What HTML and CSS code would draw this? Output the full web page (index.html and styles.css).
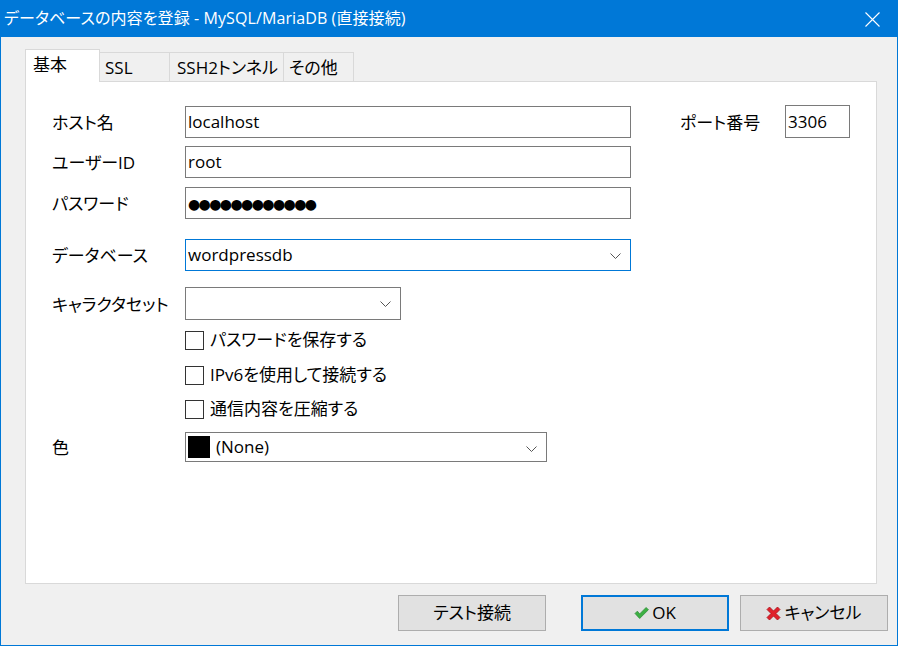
FILE: index.html
```html
<!DOCTYPE html>
<html lang="ja">
<head>
<meta charset="utf-8">
<title>データベースの内容を登録</title>
<link rel="stylesheet" href="styles.css">
</head>
<body>
<div class="window">
  <div class="titlebar">
    <span class="title">データベースの内容を登録 - MySQL/MariaDB (直接接続)</span>
    <svg class="close" width="15" height="15" viewBox="0 0 15 15"><path d="M0.5 0.5 L14.5 14.5 M14.5 0.5 L0.5 14.5" stroke="#fff" stroke-width="1.1" fill="none"/></svg>
  </div>
  <div class="client">
    <div class="tabs">
      <div class="tab active t-basic">基本</div>
      <div class="tab t-ssl">SSL</div>
      <div class="tab t-ssh">SSH2トンネル</div>
      <div class="tab t-other">その他</div>
    </div>
    <div class="panel">
      <div class="row r-host">
        <span class="label">ホスト名</span>
        <div class="field wide">localhost</div>
        <span class="label port-label">ポート番号</span>
        <div class="field port">3306</div>
      </div>
      <div class="row r-user">
        <span class="label">ユーザーID</span>
        <div class="field wide">root</div>
      </div>
      <div class="row r-pass">
        <span class="label">パスワード</span>
        <div class="field wide"><span class="dots">●●●●●●●●●●●●</span></div>
      </div>
      <div class="row r-db">
        <span class="label">データベース</span>
        <div class="field wide combo focused">wordpressdb
          <svg class="chev" width="11" height="7" viewBox="0 0 11 7"><path d="M0.5 0.5 L5.5 5.5 L10.5 0.5" stroke="#555" stroke-width="1" fill="none"/></svg>
        </div>
      </div>
      <div class="row r-charset">
        <span class="label">キャラクタセット</span>
        <div class="field charset combo">
          <svg class="chev" width="11" height="7" viewBox="0 0 11 7"><path d="M0.5 0.5 L5.5 5.5 L10.5 0.5" stroke="#555" stroke-width="1" fill="none"/></svg>
        </div>
      </div>
      <div class="row check r-c1"><span class="box"></span><span class="ctext">パスワードを保存する</span></div>
      <div class="row check r-c2"><span class="box"></span><span class="ctext">IPv6を使用して接続する</span></div>
      <div class="row check r-c3"><span class="box"></span><span class="ctext">通信内容を圧縮する</span></div>
      <div class="row r-color">
        <span class="label">色</span>
        <div class="field color combo"><span class="swatch"></span><span class="ctext">(None)</span>
          <svg class="chev" width="11" height="7" viewBox="0 0 11 7"><path d="M0.5 0.5 L5.5 5.5 L10.5 0.5" stroke="#555" stroke-width="1" fill="none"/></svg>
        </div>
      </div>
    </div>
    <div class="buttons">
      <div class="btn b-test">テスト接続</div>
      <div class="btn b-ok default">
        <svg class="ico" width="15" height="12" viewBox="0 0 16 13"><path d="M1 7 L3.5 4.5 L6 7.5 L13 0.5 L15.5 3 L6 12.5 Z" fill="#3cb043" stroke="#2a8a35" stroke-width="0.8" stroke-linejoin="round"/></svg>OK
      </div>
      <div class="btn b-cancel">
        <svg class="ico" width="15" height="15" viewBox="0 0 15 15"><path d="M1 3.5 L3.5 1 L7.5 5 L11.5 1 L14 3.5 L10 7.5 L14 11.5 L11.5 14 L7.5 10 L3.5 14 L1 11.5 L5 7.5 Z" fill="#e0202a" stroke="#a8101a" stroke-width="0.8" stroke-linejoin="round"/></svg>キャンセル
      </div>
    </div>
  </div>
</div>
</body>
</html>
```

FILE: styles.css
```css
html, body {
  margin: 0;
  padding: 0;
  background: #ffffff;
}

body {
  font-family: "Open Sans", "Noto Sans CJK JP", sans-serif;
  font-size: 17px;
  color: #000;
  font-feature-settings: "palt";
}

.window {
  width: 898px;
  height: 646px;
  display: flex;
  flex-direction: column;
}

.titlebar {
  height: 37px;
  flex: none;
  background: #0078d7;
  color: #fff;
  display: flex;
  align-items: center;
  padding-left: 4px;
  font-size: 16px;
}

.title {
  line-height: 20px;
  margin-top: -1px;
  letter-spacing: 0.1px;
}

.close {
  margin-left: auto;
  margin-right: 18px;
  margin-top: 1px;
}

.client {
  flex: 1;
  background: #f0f0f0;
  border: 1px solid #0078d7;
  border-top: none;
  padding: 12px 0 0 24px;
  display: flex;
  flex-direction: column;
}

.tabs {
  display: flex;
  align-items: flex-end;
  height: 32px;
}

.tab {
  box-sizing: border-box;
  height: 29px;
  border: 1px solid #d9d9d9;
  border-bottom: none;
  border-left: none;
  background: #f0f0f0;
  padding: 4px 0 0 5px;
  line-height: 22px;
}

.tab.active {
  height: 33px;
  margin-bottom: -1px;
  background: #fff;
  border-left: 1px solid #d9d9d9;
  position: relative;
  z-index: 1;
  padding: 4px 0 0 7px;
}

.t-basic { width: 75px; }
.t-ssl { width: 70px; }
.t-ssh { width: 114px; padding-left: 7px; }
.t-other { width: 70px; }

.panel {
  box-sizing: border-box;
  width: 852px;
  height: 503px;
  background: #fff;
  border: 1px solid #d9d9d9;
  padding: 23px 0 0 26px;
}

.row {
  display: flex;
  align-items: center;
}

.label {
  width: 133px;
  flex: none;
  line-height: 20px;
  margin-top: 2px;
}

.field {
  box-sizing: border-box;
  border: 1px solid #7a7a7a;
  height: 32px;
  display: flex;
  align-items: center;
  padding-left: 2px;
  line-height: 20px;
  position: relative;
}

.wide { width: 446px; }

.port-label {
  width: 105px;
  margin-left: 49px;
}

.port {
  width: 65px;
  height: 33px;
}

.dots {
  font-family: "DejaVu Sans", sans-serif;
  font-size: 14px;
  letter-spacing: -1.6px;
  margin-top: 2px;
}

.combo .chev {
  position: absolute;
  right: 9px;
  top: 13px;
}

.focused { border-color: #0078d7; }

.r-user { margin-top: 8px; }
.r-pass { margin-top: 9px; }
.r-db { margin-top: 20px; }
.r-charset { margin-top: 16px; }

.charset {
  width: 216px;
  height: 33px;
}

.check {
  padding-left: 133px;
  height: 24px;
}

.box {
  box-sizing: border-box;
  width: 19px;
  height: 19px;
  border: 1px solid #333;
  flex: none;
  margin-right: 6px;
}

.ctext {
  line-height: 20px;
}

.r-c1 { margin-top: 8px; }
.r-c2 { margin-top: 11px; }
.r-c3 { margin-top: 10px; }
.r-color { margin-top: 11px; }

.color {
  width: 362px;
  height: 30px;
  padding-left: 2px;
}

.swatch {
  width: 22px;
  height: 22px;
  background: #000;
  margin-right: 6px;
  flex: none;
}

.buttons {
  display: flex;
  justify-content: flex-end;
  margin: 11px 9px 0 0;
}

.btn {
  box-sizing: border-box;
  width: 148px;
  height: 36px;
  background: #e1e1e1;
  border: 1px solid #adadad;
  display: flex;
  align-items: center;
  justify-content: center;
  line-height: 20px;
}

.b-test { margin-right: 35px; }
.b-ok { margin-right: 11px; }

.default {
  border: 2px solid #0078d7;
}

.ico {
  margin-right: 3px;
}
```
